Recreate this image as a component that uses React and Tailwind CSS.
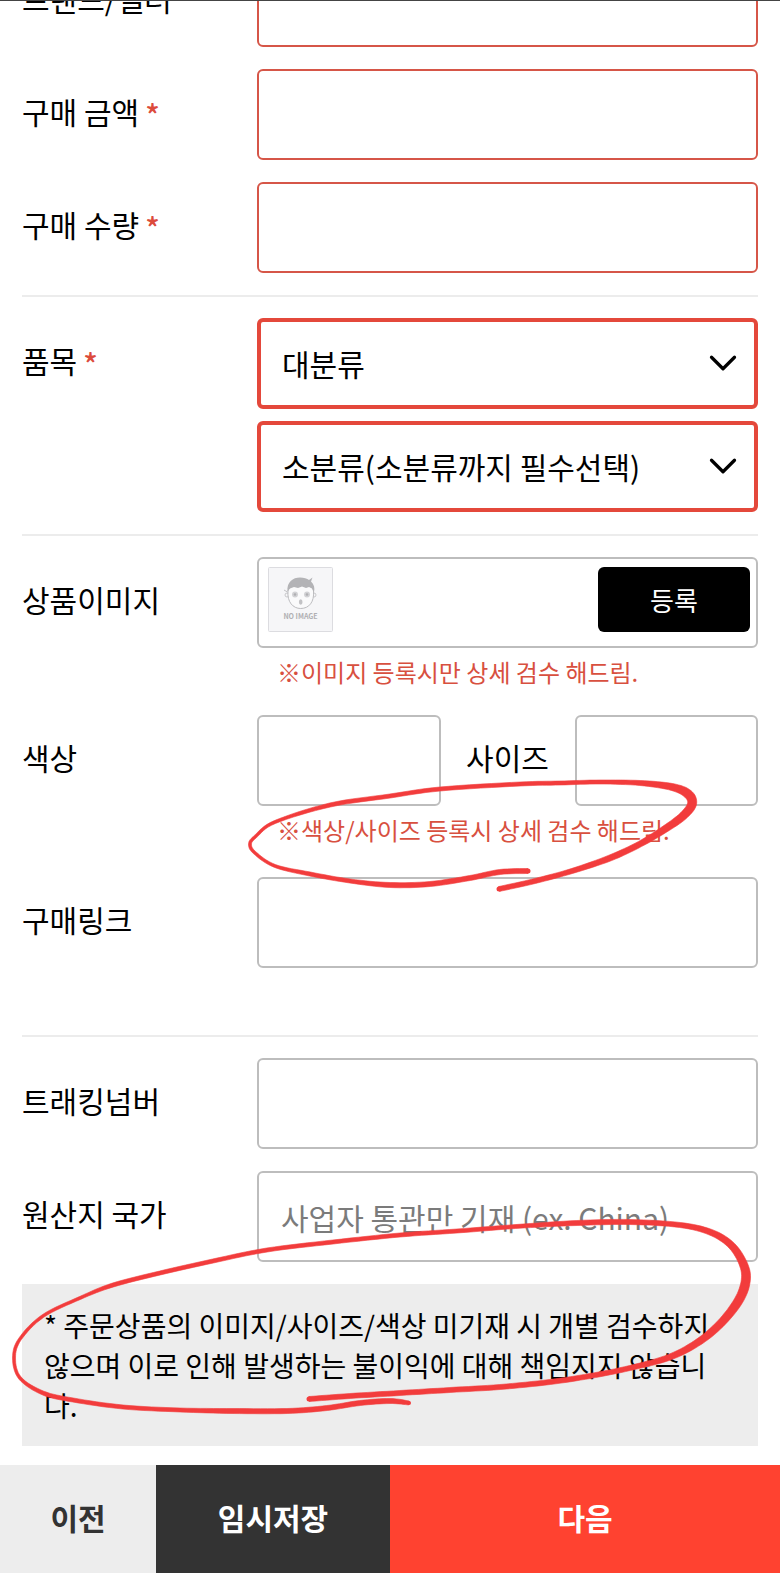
import { ChevronDown } from "lucide-react";

const fieldBase = "block w-full min-w-0 h-[91px] rounded-md border-2 bg-white px-[22px] text-[30px] outline-none";

// [x, y, width] along each pen stroke
const SIZE_NOTE_MARK = [
  [499, 888, 5], [535, 880, 5], [572, 870, 5], [610, 857, 6], [640, 843, 6], [665, 828, 7],
  [683, 815, 8], [692, 803, 9], [688, 793, 9], [672, 786, 7], [640, 782, 5], [600, 781, 4],
  [560, 782, 4], [520, 783, 4], [440, 788, 4], [390, 795, 4], [330, 804, 4], [275, 821, 3],
  [256, 835, 3], [250, 843, 3], [255, 852, 3], [275, 865, 3], [310, 873, 4], [350, 880, 4],
  [390, 884, 5], [430, 883, 5], [470, 877, 5], [500, 871, 5], [528, 870, 5],
];

const NOTICE_MARK = [
  [309, 1398, 5], [350, 1395, 5], [400, 1392, 5], [450, 1389, 5], [500, 1386, 5], [550, 1381, 5],
  [590, 1375, 5], [630, 1367, 5], [670, 1356, 6], [700, 1340, 7], [723, 1320, 8], [740, 1297, 9],
  [746, 1277, 9], [742, 1260, 8], [730, 1243, 7], [710, 1231, 6], [680, 1224, 5], [630, 1221, 5],
  [577, 1222, 5], [523, 1225, 4], [457, 1230, 4], [400, 1234, 4], [333, 1241, 4], [267, 1249, 4],
  [213, 1260, 4], [160, 1272, 4], [113, 1284, 4], [80, 1297, 3], [43, 1315, 3], [20, 1338, 3],
  [14, 1357, 3], [20, 1377, 3], [43, 1392, 4], [73, 1399, 4], [123, 1406, 4], [180, 1409, 4],
  [233, 1410, 5], [287, 1410, 5], [327, 1407, 5], [360, 1402, 5], [390, 1400, 5], [409, 1402, 4],
];

function spline(a, b, c, d, t) {
  return 0.5 * (2 * b + (c - a) * t + (2 * a - 5 * b + 4 * c - d) * t * t + (3 * b - a - 3 * c + d) * t * t * t);
}

function strokeOutline(points) {
  const samples = [];
  for (let i = 0; i < points.length - 1; i++) {
    const p0 = points[Math.max(i - 1, 0)];
    const p3 = points[Math.min(i + 2, points.length - 1)];
    for (let s = 0; s < 8; s++) {
      samples.push([0, 1, 2].map((k) => spline(p0[k], points[i][k], points[i + 1][k], p3[k], s / 8)));
    }
  }
  samples.push(points[points.length - 1]);

  const left = [];
  const right = [];
  samples.forEach(([x, y, w], i) => {
    const prev = samples[Math.max(i - 1, 0)];
    const next = samples[Math.min(i + 1, samples.length - 1)];
    const dx = next[0] - prev[0];
    const dy = next[1] - prev[1];
    const len = Math.hypot(dx, dy) || 1;
    const nx = (-dy / len) * (w / 2);
    const ny = (dx / len) * (w / 2);
    left.push(`${(x + nx).toFixed(1)},${(y + ny).toFixed(1)}`);
    right.unshift(`${(x - nx).toFixed(1)},${(y - ny).toFixed(1)}`);
  });
  return [...left, ...right].join(" ");
}

function PenStroke({ points }) {
  const [first, last] = [points[0], points[points.length - 1]];
  return (
    <g fill="#f23c3c">
      <polygon points={strokeOutline(points)} fillRule="nonzero" stroke="#f23c3c" strokeWidth="0.6" />
      <circle cx={first[0]} cy={first[1]} r={first[2] / 2} />
      <circle cx={last[0]} cy={last[1]} r={last[2] / 2} />
    </g>
  );
}

function Label({ htmlFor, required, children }) {
  return (
    <label htmlFor={htmlFor} className="flex h-[83px] items-center gap-1.5 text-[30px] leading-10 whitespace-nowrap">
      {children}
      {required && <span className="pt-1.5 font-medium text-[#dc4b3c]">*</span>}
    </label>
  );
}

function Row({ id, label, required, children }) {
  return (
    <div className="grid grid-cols-[235px_1fr] items-start">
      <Label htmlFor={id} required={required}>{label}</Label>
      <div className="min-w-0">{children}</div>
    </div>
  );
}

function Note({ children }) {
  return <p className="mt-1 h-[41px] pl-5 text-2xl leading-10 whitespace-nowrap text-[#d8503f]">{children}</p>;
}

function Select({ id, label, option }) {
  return (
    <div className="relative">
      <select
        id={id}
        aria-label={label}
        className="block h-[91px] w-full appearance-none rounded-md border-4 border-[#e4483b] bg-white pl-[21px] text-[30px] text-black outline-none"
      >
        <option>{option}</option>
      </select>
      <ChevronDown size={46} strokeWidth={1.7} className="pointer-events-none absolute top-[22px] right-3" />
    </div>
  );
}

function NoImage() {
  return (
    <svg viewBox="0 0 65 65" className="size-[65px] shrink-0" role="img" aria-label="NO IMAGE">
      <rect x="0.5" y="0.5" width="64" height="64" rx="1" fill="#f6f6f8" stroke="#dcdce0" />
      <circle cx="19" cy="28" r="2" fill="#f6f6f8" stroke="#c8c8cb" />
      <circle cx="46" cy="28" r="2" fill="#f6f6f8" stroke="#c8c8cb" />
      <path d="M20 24 C19 35 25 41.500 32.700 41.500 C41 41.500 46.500 35 45.500 24 C44 14 22 14 20 24Z" fill="#fafafb" stroke="#bcbcbf" />
      <path d="M19.500 24.500 C18.500 15 25 10.500 32 10.500 C36 10.500 39 11.500 41 13 L44.500 10.500 L43 14.500 C46 17.500 47 20.500 46 25 L44 21.500 L41 20 L38 21 L34 19.500 L30 21 L26 20 L22 21.500Z" fill="#b3b3b6" />
      <path d="M16 23 L19.500 25" stroke="#c2c2c5" />
      <circle cx="27" cy="27.500" r="3" fill="#d2d2d5" />
      <circle cx="39" cy="27.500" r="3" fill="#d2d2d5" />
      <circle cx="27" cy="27.500" r="1.300" fill="#b0b0b3" />
      <circle cx="39" cy="27.500" r="1.300" fill="#b0b0b3" />
      <ellipse cx="32.700" cy="35" rx="1.800" ry="2.800" fill="#c2c2c5" />
      <text x="32.500" y="52" textAnchor="middle" fontSize="7" fontWeight="700" fill="#b0b0b3">NO IMAGE</text>
    </svg>
  );
}

function Divider() {
  return <hr className="mt-[22px] mb-[21px] border-t-2 border-[#ececec]" />;
}

export default function App() {
  return (
    <div className="relative flex min-h-screen flex-col overflow-hidden border-t border-[#444] bg-white font-['Noto_Sans_CJK_KR',sans-serif] text-black">
      <form className="px-[22px] pb-4">
        {/* first row is scrolled partly out of view */}
        <div className="flex h-[46px] flex-col justify-end overflow-hidden">
          <Row id="brand" label="브랜드/셀러" required>
            <input id="brand" className={`${fieldBase} border-[#d65648]`} />
          </Row>
        </div>
        <div className="mt-[22px] space-y-[22px]">
          <Row id="price" label="구매 금액" required>
            <input id="price" className={`${fieldBase} border-[#d65648]`} />
          </Row>
          <Row id="count" label="구매 수량" required>
            <input id="count" className={`${fieldBase} border-[#d65648]`} />
          </Row>
        </div>

        <Divider />

        <Row id="category" label="품목" required>
          <div className="space-y-3">
            <Select id="category" option="대분류" />
            <Select id="subcategory" label="소분류" option="소분류(소분류까지 필수선택)" />
          </div>
        </Row>

        <Divider />

        <div className="space-y-[22px]">
          <Row id="image" label="상품이미지">
            <div className="flex h-[91px] items-start justify-between rounded-md border-2 border-[#bdbdbd] pt-2 pr-1.5 pl-[9px]">
              <NoImage />
              <button id="image" type="button" className="h-[65px] w-[152px] rounded-md bg-black text-[26px] text-white">
                등록
              </button>
            </div>
            <Note>※이미지 등록시만 상세 검수 해드림.</Note>
          </Row>
          <Row id="color" label="색상">
            <div className="grid grid-cols-[1fr_134px_1fr] items-start">
              <input id="color" className={`${fieldBase} border-[#bdbdbd]`} />
              <div className="flex justify-center">
                <Label htmlFor="size">사이즈</Label>
              </div>
              <input id="size" className={`${fieldBase} border-[#bdbdbd]`} />
            </div>
            <Note>※색상/사이즈 등록시 상세 검수 해드림.</Note>
          </Row>
          <div className="pt-1">
            <Row id="link" label="구매링크">
              <input id="link" className={`${fieldBase} border-[#bdbdbd]`} />
              <Note />
            </Row>
          </div>
        </div>

        <Divider />

        <div className="space-y-[22px]">
          <Row id="tracking" label="트래킹넘버">
            <input id="tracking" className={`${fieldBase} border-[#bdbdbd]`} />
          </Row>
          <Row id="origin" label="원산지 국가">
            <input
              id="origin"
              placeholder="사업자 통관만 기재 (ex. China)"
              className={`${fieldBase} border-[#bdbdbd] placeholder:text-[#7b7b7b]`}
            />
          </Row>
          <p className="bg-[#ededed] px-[22px] py-[21px] text-[28px] leading-10 break-all">
            * 주문상품의 이미지/사이즈/색상 미기재 시 개별 검수하지 않으며 이로 인해 발생하는 불이익에 대해 책임지지 않습니다.
          </p>
        </div>
      </form>

      <div className="mt-auto grid h-[108px] shrink-0 grid-cols-[2fr_3fr_5fr] text-[30px] font-bold">
        <button type="button" className="bg-[#ededed] pb-1 text-[#333]">이전</button>
        <button type="button" className="bg-[#333] pb-1 text-white">임시저장</button>
        <button type="button" className="bg-[#ff4230] pb-1 text-white">다음</button>
      </div>

      <svg viewBox="0 0 780 1573" className="pointer-events-none absolute top-0 left-0 w-full" aria-hidden="true">
        <PenStroke points={SIZE_NOTE_MARK} />
        <PenStroke points={NOTICE_MARK} />
      </svg>
    </div>
  );
}
